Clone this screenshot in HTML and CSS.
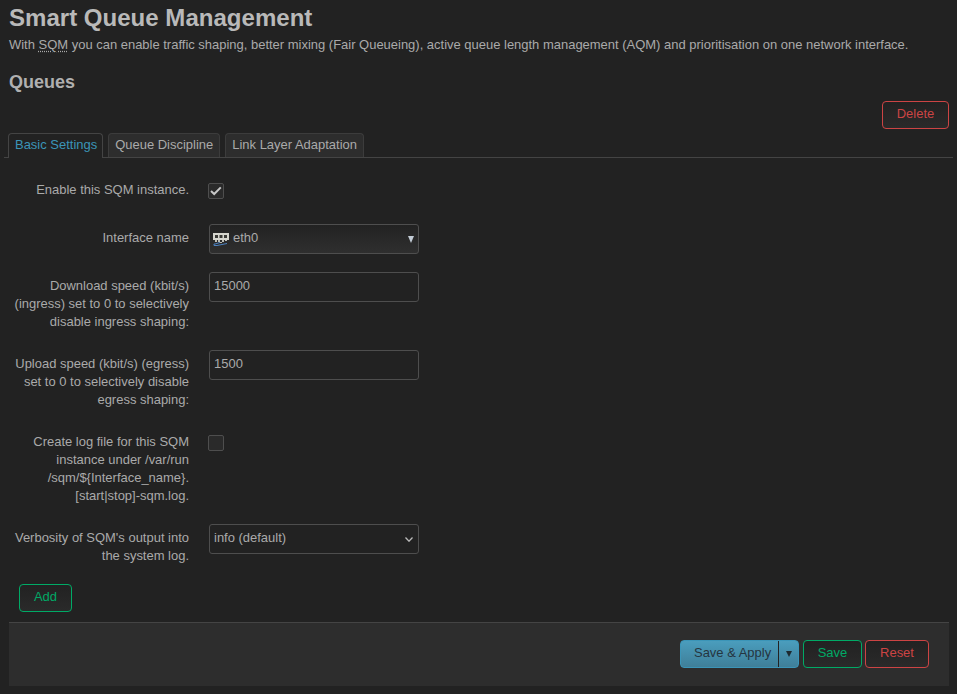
FILE: index.html
```html
<!DOCTYPE html>
<html lang="en">
<head>
<meta charset="utf-8">
<title>Smart Queue Management</title>
<link rel="stylesheet" href="styles.css">
</head>
<body>
<main class="page">
  <h2 class="title">Smart Queue Management</h2>
  <p class="intro">With <abbr class="abbr">SQM</abbr> you can enable traffic shaping, better mixing (Fair Queueing), active queue length management (AQM) and prioritisation on one network interface.</p>
  <h3 class="section">Queues</h3>
  <div class="delete-row"><button class="btn btn-red btn-delete">Delete</button></div>
  <ul class="tabs">
    <li class="tab tab-active">Basic Settings</li>
    <li class="tab">Queue Discipline</li>
    <li class="tab">Link Layer Adaptation</li>
  </ul>
  <div class="form">
    <div class="row">
      <label class="label">Enable this SQM instance.</label>
      <div class="field"><span class="check"><svg width="12" height="10" viewBox="0 0 12 10"><path d="M1 5 4.200 8 10.800 1.400" fill="none" stroke="#c8c8c8" stroke-width="2"/></svg></span></div>
    </div>
    <div class="row">
      <label class="label">Interface name</label>
      <div class="field">
        <div class="dropdown">
          <svg class="port" width="16" height="13" viewBox="0 0 16 13">
            <rect x="0" y="0" width="16" height="7" fill="#d6d6ce"/>
            <path d="M2 2h3v3H2zM6.500 2h3v3h-3zM11 2h3v3h-3z" fill="#3a3a36"/>
            <path d="M2 7h2v2H2zM5 7h2v2H5zM9 7h2v2H9zM12 7h2v1H12zM6 9h3v1H6z" fill="#bdbdb5"/>
            <path d="M7 9.500 2 11H1v1.500H4L14 10.500" fill="none" stroke="#4d82c0" stroke-width="1"/>
          </svg>
          <span class="control-text dropdown-text">eth0</span>
          <svg class="dropdown-arrow" width="6" height="7" viewBox="0 0 6 7"><path d="M0 0H6L3 7Z" fill="#c3ccd6"/></svg>
        </div>
      </div>
    </div>
    <div class="row">
      <label class="label">Download speed (kbit/s) (ingress) set to 0 to selectively disable ingress shaping:</label>
      <div class="field"><input class="input" type="text" value="15000"></div>
    </div>
    <div class="row">
      <label class="label">Upload speed (kbit/s) (egress) set to 0 to selectively disable egress shaping:</label>
      <div class="field"><input class="input" type="text" value="1500"></div>
    </div>
    <div class="row">
      <label class="label">Create log file for this SQM instance under /var/run /sqm/${Interface_name}. [start|stop]-sqm.log.</label>
      <div class="field"><span class="check"></span></div>
    </div>
    <div class="row">
      <label class="label">Verbosity of SQM's output into the system log.</label>
      <div class="field">
        <div class="select">
          <span class="control-text">info (default)</span>
          <svg width="8" height="5" viewBox="0 0 8 5"><path d="M0.500 0.500 4 4.200 7.500 0.500" fill="none" stroke="#bbb" stroke-width="1.300"/></svg>
        </div>
      </div>
    </div>
  </div>
  <div class="add-row"><button class="btn btn-green btn-add">Add</button></div>
  <div class="actions">
    <div class="split">
      <span class="split-main">Save &amp; Apply</span>
      <span class="split-arrow"><svg width="6" height="6" viewBox="0 0 6 6"><path d="M0 0H6L3 6Z" fill="#1e2a30"/></svg></span>
    </div>
    <button class="btn btn-green btn-save">Save</button>
    <button class="btn btn-red btn-reset">Reset</button>
  </div>
</main>
</body>
</html>
```
FILE: styles.css
```css
* { box-sizing: border-box; }
html, body { margin: 0; padding: 0; height: 100%; }
body {
  background: #222;
  color: #aaa;
  font-family: "Liberation Sans", Arial, sans-serif;
  font-size: 12.97px;
  line-height: 18px;
  overflow: hidden;
}
.page { padding: 0 8px 0 9px; }
.title {
  margin: 0;
  padding-top: 4px;
  font-size: 24.05px;
  line-height: 27px;
  font-weight: 700;
  color: #b9b9b9;
}
.intro { margin: 5px 0 0; }
.abbr { text-decoration: underline dotted; text-underline-offset: 2px; }
.section {
  margin: 18px 0 0;
  font-size: 18px;
  line-height: 20px;
  font-weight: 700;
  color: #b0b0b0;
}
.delete-row { display: flex; justify-content: flex-end; margin-top: 9px; }
.btn {
  height: 28px;
  border-radius: 4px;
  background: linear-gradient(#222, #2a2a2a);
  font: inherit;
  padding: 0 0 2px;
  border: 1px solid;
}
.btn-red { color: #c44; border-color: #c44; }
.btn-green { color: #0a6; border-color: #0a6; }
.btn-delete { width: 67px; }
.tabs {
  list-style: none;
  margin: 4px -4px 0 -5px;
  padding: 0 0 0 4px;
  display: flex;
  gap: 5px;
  border-bottom: 1px solid #444;
  height: 25px;
}
.tab {
  height: 24px;
  padding: 2px 6px 0;
  background: #2d2d2d;
  border: 1px solid #3c3c3c;
  border-bottom: 0;
  border-radius: 4px 4px 0 0;
  white-space: nowrap;
}
.tab-active {
  height: 25px;
  padding-right: 5px;
  background: #222;
  border-color: #444;
  color: #3b95b8;
}
.form { padding-top: 18px; }
.row { display: flex; margin-bottom: 18px; min-height: 30px; }
.label {
  width: 180px;
  flex: none;
  padding: 5px 0 1px;
  text-align: right;
}
.field { margin-left: 20px; width: 210px; }
.check {
  display: flex;
  align-items: center;
  justify-content: center;
  width: 16px;
  height: 16px;
  margin: 7px 0 0 -1px;
  border: 1px solid #4e4e4e;
  border-radius: 2px;
  background: #2a2a2a;
}
.control-text { padding-bottom: 2px; }
.dropdown {
  display: flex;
  align-items: center;
  height: 30px;
  padding: 0 4px 0 3px;
  border: 1px solid #4e4e4e;
  border-radius: 3px;
  background: linear-gradient(#222, #2f2f2f);
}
.port { flex: none; }
.dropdown-text { margin-left: 4px; flex: 1; }
.dropdown-arrow { flex: none; }
.input {
  display: block;
  width: 100%;
  height: 30px;
  padding: 0 4px 4px;
  margin: 0;
  border: 1px solid #4e4e4e;
  border-radius: 3px;
  background: #222;
  color: #aaa;
  font: inherit;
  outline: 0;
}
.select {
  display: flex;
  align-items: center;
  justify-content: space-between;
  height: 30px;
  padding: 0 5px 0 4px;
  border: 1px solid #4e4e4e;
  border-radius: 3px;
  background: #222;
}
.add-row { padding-left: 10px; }
.btn-add { width: 53px; }
.actions {
  display: flex;
  justify-content: flex-end;
  align-items: flex-start;
  gap: 3px;
  height: 64px;
  margin-top: 10px;
  padding: 17px 20px 0 0;
  border-top: 1px solid #444;
  background: #2d2d2d;
}
.split {
  display: flex;
  width: 119px;
  height: 28px;
  border: 1px solid #3b95b8;
  border-radius: 4px;
  background: linear-gradient(#4a9dbd, #3f7f99);
  color: #253540;
  margin-right: 1px;
}
.split-main { flex: 1; padding-left: 13px; line-height: 24px; border-right: 1px solid #222; }
.split-arrow { width: 19px; display: flex; align-items: center; justify-content: center; }
.btn-save { width: 59px; }
.btn-reset { width: 64px; }
```
